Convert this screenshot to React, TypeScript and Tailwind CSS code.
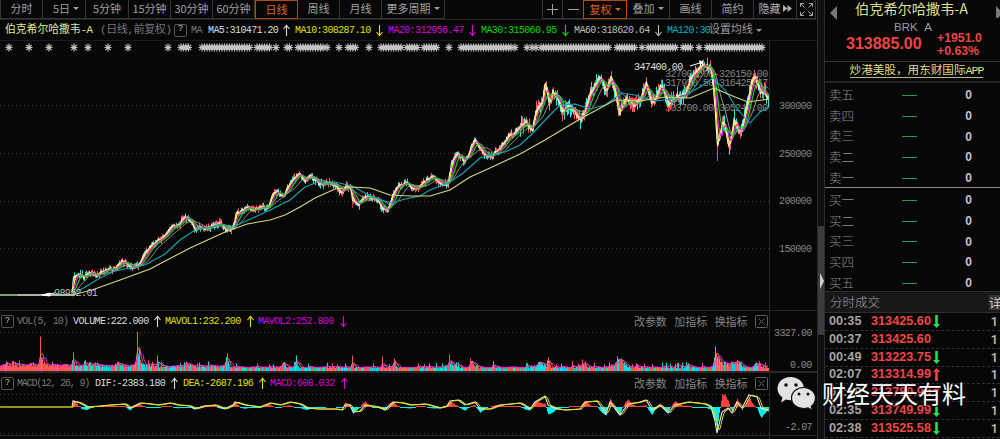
import React from 'react';
import clsx from 'clsx';

type Point = [number, number];

const parse = (s: string): Point[] => s.split(' ').map(p => p.split(',').map(Number) as Point);

const PRICE = parse(
  '0,295 72,295 73,277 80,274 84,277 90,273 97,276 105,270 115,268 122,261 128,265 133,268 138,265 143,256 150,246 158,241 167,233 172,226 180,224 184,216 190,220 195,231 200,227 205,228 213,226 220,223 226,230 231,229 234,224 236,213 241,212 246,207 252,210 262,208 268,208 272,195 277,191 281,196 284,195 288,186 295,177 299,173 305,181 310,176 317,182 323,185 330,182 336,186 341,193 346,186 350,188 352,199 359,205 364,197 371,198 376,200 384,210 388,209 393,195 396,188 406,182 412,188 418,188 424,182 433,177 440,184 448,184 451,164 457,153 464,162 470,150 474,139 480,149 486,156 492,156 500,148 508,138 515,134 520,126 525,122 532,130 536,110 542,104 545,84 549,104 553,92 557,98 562,112 568,105 573,110 580,120 586,108 589,94 594,88 600,75 606,92 611,77 616,96 619,115 626,98 634,104 640,100 646,83 652,104 657,95 661,84 668,105 674,100 679,95 685,95 690,78 696,72 702,65 710,66 713,82 717,145 723,120 729,148 734,120 740,135 746,110 751,82 755,76 760,92 764,90 769,100'
);
const MA120 = '72,295 100,278 115,271 145,265 165,254 180,240 195,230 215,226 235,226 255,217 270,210 290,200 305,187 318,182 335,182 352,186 365,193 380,200 392,203 405,199 420,196 430,190 448,183 462,174 480,158 488,155 505,152 520,145 532,134 550,115 560,105 575,104 590,109 605,105 622,93 635,95 655,101 680,98 700,87 713,78 725,90 738,110 750,123 760,112 769,107';
const MA250 = '72,295 92,290 120,280 150,269 190,248 225,232 247,224 270,220 285,215 300,207 315,198 335,189 352,187 370,188 390,195 410,196 430,196 450,190 470,177 490,168 520,154 545,140 580,119 615,100 640,101 665,97 690,98 714,88 735,97 748,102 769,99';
const DIF = parse(
  '0,407 72,407 73,401 80,403 87,407 100,406 110,405 125,404 130,408 140,403 150,404 158,405 170,403 178,405 190,406 195,409 205,406 215,405 225,409 233,405 235,402 245,405 260,407 270,403 280,405 290,402 300,404 307,408 318,409 335,409 342,410 345,405 350,405 353,412 360,411 365,405 378,407 385,410 393,402 403,403 410,405 425,404 440,408 447,406 450,401 458,400 465,405 475,402 480,409 490,409 500,405 520,403 530,409 535,402 540,399 545,396 548,405 557,409 565,410 580,409 585,402 597,401 602,408 606,414 610,402 616,410 620,415 628,404 640,402 646,400 652,410 660,405 668,413 675,405 688,402 705,404 711,407 715,421 717,433 722,412 728,408 732,413 737,402 742,408 749,395 757,397 761,408 769,411'
);

// small deterministic generator, so the candles don't jump between renders
const random = (seed: number) => () => {
  seed = (seed * 16807) % 2147483647;
  return seed / 2147483647;
};

const sample = (pts: Point[], x: number) => {
  const i = Math.max(1, pts.findIndex(p => p[0] >= x));
  const [x0, y0] = pts[i - 1];
  const [x1, y1] = pts[i];
  return y0 + ((y1 - y0) * (x - x0)) / (x1 - x0);
};

const STEP = 0.5;
const noise = random(77);
const closes: Point[] = Array.from({ length: 1538 }, (_, i) => {
  const x = i * STEP;
  const amp = x < 72 ? 0 : x < 500 ? 4 : 7;
  return [x, sample(PRICE, x) + (noise() - 0.5) * amp];
});

const average = (pts: Point[], n: number) => {
  let sum = 0;
  return pts
    .map(([x, y], i) => {
      sum += y;
      if (i >= n) sum -= pts[i - n][1];
      return `${x},${(sum / Math.min(n, i + 1)).toFixed(1)}`;
    })
    .join(' ');
};

const candleNoise = random(1234);
const candles = closes
  .filter(([x], i) => x > 72 && i % 2 === 0)
  .map(([x, y]) => {
    const amp = x < 520 ? 3 : 7;
    return { x: x + 0.5, top: y - 1 - candleNoise() * amp, bottom: y + 1 + candleNoise() * amp, up: candleNoise() > 0.5 };
  });

// [x, height, spread]
const SPIKES = [
  [30, 4, 2], [40, 22, 0.8], [42, 6, 2], [73, 7, 1.5], [90, 6, 1], [117, 4, 2], [137, 34, 0.7], [138, 12, 2.2], [157, 14, 0.6], [187, 4, 2], [227, 7, 2.5],
  [283, 5, 3], [296, 12, 1.2], [352, 11, 1], [382, 8, 1], [394, 8, 2], [418, 5, 1], [449, 13, 0.8], [451, 4, 5], [472, 6, 3], [493, 8, 0.8], [540, 5, 5],
  [548, 9, 1.5], [572, 6, 0.7], [583, 5, 3], [619, 7, 6], [688, 5, 1.5], [715, 12, 1], [717, 12, 4], [725, 4, 6], [737, 7, 4], [757, 4, 4],
];
const volNoise = random(4242);
const volumes = Array.from({ length: 769 }, (_, x) => {
  const base = x < 150 ? 6 : x < 230 ? 5 : 3.8;
  const h = SPIKES.reduce((v, [c, a, w]) => v + a * Math.exp(-((x - c) ** 2) / (w * w)), base);
  const r = volNoise();
  const up = volNoise() > (x < 72 ? 0.02 : 0.5);
  return { x, h: h * (0.7 + r * 0.45) + (volNoise() > 0.9 ? 4 : 0), up };
});
const volLine = (k: number) => average(volumes.map(v => [v.x, 371 - v.h] as Point), k);

const dense = Array.from({ length: 768 }, (_, x) => [x, sample(DIF, x)] as Point);
const difLine = DIF.map(p => p.join(',')).join(' ');
const hist = Array.from({ length: 697 }, (_, i) => {
  const x = i + 72;
  const lag = (sample(DIF, Math.max(0, x - 2)) + sample(DIF, Math.max(0, x - 5)) + sample(DIF, Math.max(0, x - 8))) / 3;
  return { x, h: (lag - sample(DIF, x)) * 1.1 };
});

const STARS = [
  [9], [29], [49], [74], [88], [108], [128], [168], [181, 190], [202, 251], [257, 271], [276], [287, 290], [298, 324], [327], [339], [348, 356],
  [369], [381, 402], [407, 417], [424, 438], [449], [461, 511], [515], [527], [532], [536], [541, 610], [617, 636], [642], [648, 676],
  [683, 692], [699], [707, 763],
];
const stars = STARS.flatMap(([a, b = a]) => {
  const xs: number[] = [];
  for (let x = a; x <= b; x += 2.5) xs.push(x);
  return xs;
});

const Caret = () => <span className="ml-[3px] border-x-[3px] border-t-[3px] border-x-transparent border-t-current" />;

const Tab = ({ label, width, caret, active }: { label: string; width: string; caret?: boolean; active?: boolean }) => (
  <div
    className={clsx(
      'flex h-[19px] shrink-0 items-center justify-center whitespace-nowrap border-b pb-px text-[11px]',
      width,
      active ? 'border border-[#b9480c] text-[#e0611c]' : 'border-r border-[#353535] text-[#a0a0a0]'
    )}
  >
    {label}
    {caret && <Caret />}
  </div>
);

const Arrow = ({ down }: { down?: boolean }) => (
  <svg width="7" height="13" viewBox="0 0 7 13" className={clsx('shrink-0', down && 'rotate-180')}>
    <path d="M3.5 12V1.5M.5 5l3-3.7 3 3.7" fill="none" stroke="currentColor" strokeWidth="1.1" />
  </svg>
);

const Metric = ({ text, width, color, down }: { text: string; width: string; color: string; down?: boolean }) => (
  <div className={clsx('flex shrink-0 items-center justify-between', width, color)}>
    <span>{text}</span>
    <Arrow down={down} />
  </div>
);

const Help = () => (
  <span className="flex h-[13px] w-[13px] shrink-0 items-center justify-center rounded-[2px] border border-[#555] text-[9px] tracking-normal text-[#bbb]">?</span>
);

const mono = "font-['Liberation_Mono','Noto_Sans_CJK_SC',monospace] text-[10px] tracking-[-0.6px] whitespace-pre";
const svgMono = "font-['Liberation_Mono',monospace] text-[10px] tracking-[-0.6px]";

const PanelActions = () => (
  <div className="ml-auto flex w-[134px] items-center justify-between font-['Noto_Sans_CJK_SC',sans-serif] text-[11px] tracking-[-0.1px] text-[#858585]">
    <span>改参数</span>
    <span>加指标</span>
    <span>换指标</span>
    <svg width="13" height="13" viewBox="0 0 13 13" fill="none" stroke="#606060">
      <rect x=".5" y=".5" width="12" height="12" rx="1" />
      <path d="M3.5 3.5l6 6M9.5 3.5l-6 6" />
    </svg>
  </div>
);

const Toolbar = () => (
  <div className="flex h-5 w-[817px] border-b border-[#242424]">
    <div className="flex border-l border-[#353535]">
      <Tab label="分时" width="w-[42px]" />
      <Tab label="5日" width="w-[43px] pl-1" caret />
      <Tab label="5分钟" width="w-[43px]" />
      <Tab label="15分钟" width="w-[42px]" />
      <Tab label="30分钟" width="w-[42px]" />
      <Tab label="60分钟" width="w-[42px]" />
      <Tab label="日线" width="w-[43px]" active />
      <Tab label="周线" width="w-[42px]" />
      <Tab label="月线" width="w-[42px]" />
      <Tab label="更多周期" width="w-[63px]" caret />
    </div>
    <div className="ml-auto mr-px flex border-l border-[#353535]">
      <div className="flex h-[19px] w-5 items-center justify-center border-r border-b border-[#353535]">
        <svg width="11" height="11" stroke="#a0a0a0"><path d="M5.5 0v11M0 5.5h11" /></svg>
      </div>
      <div className="flex h-[19px] w-5 items-center justify-center border-b border-[#353535]">
        <svg width="11" height="11" stroke="#a0a0a0"><path d="M0 5.5h11" /></svg>
      </div>
      <Tab label="复权" width="w-11" caret active />
      <Tab label="叠加" width="w-[43px]" caret />
      <Tab label="画线" width="w-[42px]" />
      <Tab label="简约" width="w-[42px]" />
      <div className="flex h-[19px] w-[43px] items-center justify-center gap-[2px] border-r border-b border-[#353535] pb-px text-[11px] text-[#b0b0b0]">
        隐藏
        <svg width="9" height="7" fill="#b0b0b0"><path d="M0 0l4.5 3.5L0 7zM4.5 0L9 3.5 4.5 7z" /></svg>
      </div>
      <div className="flex h-[19px] w-[19px] items-center justify-center border-r border-b border-[#353535]">
        <svg width="13" height="13" viewBox="0 0 13 13" fill="none" stroke="#a8a8a8">
          <path d="M.5 4V.5H4M.5.5l4 4M9 .5h3.500V4M12.500.5l-4 4M.5 9v3.500H4M.5 12.500l4-4M9 12.500h3.500V9M12.500 12.500l-4-4" />
        </svg>
      </div>
    </div>
  </div>
);

const MaHeader = () => (
  <div className={clsx('flex h-[21px] items-center border-b border-[#1c1c1c] pl-[5px]', mono)}>
    <span className="w-[95px] shrink-0 text-[10.8px] tracking-[-0.5px] text-[#e6e696]">
      <span className="tracking-normal">伯克希尔哈撒韦</span>-A
    </span>
    <span className="w-[74px] shrink-0 text-[11px] tracking-[-0.4px] text-[#777]">(日线,前复权)</span>
    <Help />
    <span className="ml-[4px] w-[17px] shrink-0 text-[#777]">MA</span>
    <Metric text="MA5:310471.20" width="w-[82px]" color="text-[#dcdcdc]" />
    <Metric text="MA10:308287.10" width="ml-[5px] w-[88px]" color="text-[#e0e000]" down />
    <Metric text="MA20:312956.47" width="ml-[5px] w-[88px]" color="text-[#dc00dc]" down />
    <Metric text="MA30:315060.95" width="ml-[5px] w-[88px]" color="text-[#00dc00]" down />
    <Metric text="MA60:318620.64" width="ml-[5px] w-[88px]" color="text-[#bcbcbc]" down />
    <span className="ml-[5px] w-[42px] shrink-0 text-[#00b4c4]">MA120:30</span>
    <span className="flex shrink-0 items-center text-[11px] tracking-[-0.1px] text-[#9a9a9a]">
      设置均线
      <Caret />
    </span>
  </div>
);

const line = (points: string, stroke: string, width = 1) => <polyline points={points} fill="none" stroke={stroke} strokeWidth={width} />;

const PriceChart = () => (
  <svg width="817" height="269" viewBox="0 41 817 269" className="block shrink-0">
    <path
      d={stars.map(x => `M${x - 3.5} 47.500h7M${x} 43.500v8M${x - 2.7} 44.800l5.400 5.400M${x - 2.7} 50.200l5.400-5.400`).join('')}
      stroke="#c4c4c4"
      strokeWidth="1.200"
    />
    {[105.5, 153.5, 201.5, 248.5].map(y => (
      <path key={y} d={`M0 ${y}H769`} stroke="#3a3a3a" strokeDasharray="1 3" />
    ))}
    <path d="M769.500 41V310" stroke="#2a2a2a" />
    <g className={svgMono} fill="#858585">
      <text x="665" y="77">327000.00-326150.00</text>
      <text x="665" y="86">317950.50-316425.47</text>
      <text x="665" y="111">303700.00-305247.00</text>
      <text x="779" y="109">300000</text>
      <text x="779" y="157">250000</text>
      <text x="779" y="204">200000</text>
      <text x="779" y="252">150000</text>
    </g>
    {candles.map(c => (
      <path key={c.x} d={`M${c.x} ${c.top}V${c.bottom}`} stroke={c.up ? '#f05a5a' : '#30e0e0'} />
    ))}
    <path d="M717.500 130V161" stroke="#20a0b0" />
    <path d="M352.500 200V208" stroke="#a04040" />
    {line(average(closes, 2), '#fff0d0', 1.1)}
    {line(average(closes, 6), '#f0f040', 1.2)}
    {line(average(closes, 11), '#e020e0', 1.2)}
    {line(average(closes, 18), '#10d010', 1.2)}
    {line(average(closes, 34), '#a0a0a0')}
    {line(MA120, '#10a8b8', 1.1)}
    {line(MA250, '#d8d880', 1.1)}
    <path d="M17 295H72" stroke="#b8b8b8" strokeWidth="1.500" />
    <path d="M690 66l13-4M699 61l4 1-3 3M42 295l8-2v3zM50 294l5-1" stroke="#fff" fill="#fff" />
    <g className={svgMono} fill="#e0e0e0">
      <text x="634" y="70">347400.00</text>
      <text x="54" y="296" fill="#bdbdbd">98952.01</text>
    </g>
  </svg>
);

const VolumePanel = () => (
  <div className="h-[62px] border-t border-[#262626]">
    <div className="flex h-[21px]">
      <div className={clsx('flex w-[769px] items-center pl-px pr-[1px]', mono)}>
        <Help />
        <span className="ml-[3px] w-[56px] shrink-0 tracking-[-0.9px] text-[#777]">VOL(5, 10)</span>
        <Metric text="VOLUME:222.000" width="w-[88px]" color="text-[#dcdcdc]" />
        <Metric text="MAVOL1:232.200" width="ml-[4px] w-[89px]" color="text-[#e0e000]" />
        <Metric text="MAVOL2:252.800" width="ml-[4px] w-[89px]" color="text-[#dc00dc]" down />
        <PanelActions />
      </div>
      <div className="w-px bg-[#2a2a2a]" />
    </div>
    <svg width="817" height="40" viewBox="0 332 817 40" className="block overflow-visible">
      <path d="M0 332.500H769" stroke="#3a3a3a" strokeDasharray="1 3" />
      <path d="M769.500 331V372M0 371.500H817" stroke="#2a2a2a" />
      {volumes.map(v => (
        <path key={v.x} d={`M${v.x + 0.5} 371V${Math.max(332, 371 - v.h)}`} stroke={v.up ? '#ff5555' : '#00e0e6'} />
      ))}
      {line(volLine(4), '#e8b050', 0.7)}
      {line(volLine(7), '#f020f0', 1)}
      <g className={svgMono} fill="#8c8c8c">
        <text x="774" y="336">3327.00</text>
        <text x="790" y="368">0.00</text>
      </g>
    </svg>
  </div>
);

const MacdPanel = () => (
  <div className="h-[67px]">
    <div className="flex h-[22px] border-t border-[#262626]">
      <div className={clsx('flex w-[769px] items-center pl-px pr-[1px]', mono)}>
        <Help />
        <span className="ml-[3px] w-[78px] shrink-0 tracking-[-1.2px] text-[#777]">MACD(12, 26, 9)</span>
        <Metric text="DIF:-2383.180" width="w-[83px]" color="text-[#dcdcdc]" />
        <Metric text="DEA:-2687.196" width="ml-[5px] w-[83px]" color="text-[#e0e000]" />
        <Metric text="MACD:608.032" width="ml-[4px] w-[78px]" color="text-[#dc00dc]" />
        <PanelActions />
      </div>
      <div className="w-px bg-[#2a2a2a]" />
    </div>
    <svg width="817" height="45" viewBox="0 394 817 45" className="block">
      <path d="M0 394.500H769M0 433.500H769" stroke="#3a3a3a" strokeDasharray="1 3" />
      <path d="M769.500 394V439M0 435.500H817" stroke="#2a2a2a" />
      {hist.map(b => (
        <path key={b.x} d={`M${b.x + 0.5} 407V${407 - (Math.abs(b.h) < 1 ? Math.sign(b.h) : b.h)}`} stroke={b.h > 0 ? '#ff4040' : '#00f0f0'} />
      ))}
      {line(difLine, '#e8e8e8', 1.1)}
      <g transform="translate(1 0)">{line(average(dense, 3), '#e4e400', 1)}</g>
      <path d="M0 407H72" stroke="#8c8c00" strokeWidth="1.500" />
      <text x="785" y="430" className={svgMono} fill="#8c8c8c">-2.07</text>
    </svg>
  </div>
);

const Level = ({ label }: { label: string }) => (
  <div className="flex h-[20.7px] items-center pl-[4px]">
    <span className="w-[73px] text-[12.5px] font-light text-[#909090]">{label}</span>
    <span className="h-px w-[15px] bg-[#23a045]" />
    <span className="ml-auto mr-[28px] font-['Liberation_Sans',sans-serif] text-[12px] font-bold text-[#c4c4c4]">0</span>
  </div>
);

const TRADES = [
  { time: '00:35', price: '313425.60', dir: 'down' },
  { time: '00:37', price: '313425.60', dir: '' },
  { time: '00:49', price: '313223.75', dir: 'down' },
  { time: '02:07', price: '313314.99', dir: 'up' },
  { time: '02:19', price: '313780.99', dir: 'up' },
  { time: '02:35', price: '313749.99', dir: 'down' },
  { time: '02:38', price: '313525.58', dir: 'down' },
];

const QuotePanel = () => (
  <div className="flex w-[176px] shrink-0 flex-col overflow-hidden border-l border-[#2c2c2c]">
    <div className="flex h-[62px] flex-col border-b border-[#343434]">
      <div className="flex h-[18px] pl-[5px]">
        <span className="mt-[6px] border-y-[7px] border-r-[7px] border-y-transparent border-r-[#777]" />
        <span className="ml-[18px] whitespace-nowrap text-[14.2px] leading-4 text-[#dede92]">伯克希尔哈撒韦-A</span>
        <span className="mt-[6px] ml-auto w-[4px] overflow-hidden"><span className="block border-y-[7px] border-l-[7px] border-y-transparent border-l-[#777]" /></span>
      </div>
      <div className="h-[14px] pl-px text-center font-['Liberation_Sans',sans-serif] text-[11.5px] leading-[18px] text-[#989ca4] [word-spacing:4px]">BRK A</div>
      <div className="flex pl-[21px] font-['Liberation_Sans',sans-serif] font-bold text-[#ee4444]">
        <span className="w-[91px] text-[16px] leading-[23px]">313885.00</span>
        <span className="text-[12.3px] leading-[13px]">+1951.0<br />+0.63%</span>
      </div>
    </div>
    <div className="flex h-[21px] shrink-0 items-center justify-center border-b-2 border-[#242424] pl-[8px]">
      <span className="border-b border-[#b8b878] font-['Liberation_Mono','Noto_Sans_CJK_SC',monospace] text-[11.6px] leading-[12px] whitespace-nowrap text-[#dede92]">炒港美股，用东财国际<span className="tracking-[-1px]">APP</span></span>
    </div>
    <div className="h-[105px] shrink-0 border-b border-[#8a8a8a] pt-[2px]">
      {['卖五', '卖四', '卖三', '卖二', '卖一'].map(l => <Level key={l} label={l} />)}
    </div>
    <div className="h-[103px] shrink-0 pt-[2px]">
      {['买一', '买二', '买三', '买四', '买五'].map(l => <Level key={l} label={l} />)}
    </div>
    <div className="flex h-[22px] shrink-0 items-center justify-between border-y border-[#2e2e2e] bg-[#181818] pl-[5px] text-[12.5px] font-light text-[#a4a4a4]">
      <span>分时成交</span>
      <span className="w-[11px] overflow-hidden bg-[#333] font-normal leading-[15px] text-[#ccc]">详</span>
    </div>
    {TRADES.map(t => (
      <div key={t.time} className="flex h-[17.85px] shrink-0 items-center border-b border-dashed border-[#303030] pl-[4px] font-['Liberation_Sans',sans-serif] text-[12.7px] font-bold">
        <span className="w-[42px] text-[#a4a4a4]">{t.time}</span>
        <span className="w-[61px] text-[#ec4848]">{t.price}</span>
        {t.dir && (
          <svg width="7" height="13" viewBox="0 0 7 13" fill={t.dir === 'up' ? '#ff4040' : '#2ade55'} className={clsx('ml-[1px]', t.dir === 'down' && 'rotate-180')}>
            <path d="M3.500 0L7 4H4.800V13H2.200V4H0z" />
          </svg>
        )}
        <span className="ml-auto mr-[2px] font-['Roboto',sans-serif] font-medium text-[#c0c0c0]">1</span>
      </div>
    ))}
  </div>
);

const Watermark = () => (
  <div className="absolute left-[777px] top-[375px] flex items-center">
    <svg width="39" height="35" viewBox="0 0 39 35">
      <path d="M13.500 1C6 1 .5 6 .5 12.500c0 4 2 7 5 9l-1.500 5 5-3q2 .7 5 .7C21 24 27 19 27 12.500S21 1 13.500 1z" fill="#e2e2e2" />
      <path d="M26.500 11.500C20 11.500 14.500 16 14.500 22s5 10.500 12 10.500q2.500 0 4.500-.7l4.500 2.500-1.200-4c2.500-2 4.200-4.800 4.200-8.300 0-6-5.500-10.500-12-10.500z" fill="#e2e2e2" stroke="#111" strokeWidth="1.200" />
      <g fill="#111">
        <circle cx="9" cy="9" r="1.800" />
        <circle cx="19" cy="9" r="1.800" />
        <circle cx="22" cy="18" r="1.500" />
        <circle cx="31" cy="18" r="1.500" />
      </g>
    </svg>
    <span className="ml-[6px] whitespace-nowrap text-[24px] leading-[36px] text-white [text-shadow:1px_1px_1px_#000]">财经天天有料</span>
  </div>
);

export default function App() {
  return (
    <div className="relative flex h-[439px] w-[1000px] overflow-hidden bg-[#070707] font-['Noto_Sans_CJK_SC',sans-serif]">
      <div className="flex w-[817px] shrink-0 flex-col">
        <Toolbar />
        <MaHeader />
        <PriceChart />
        <VolumePanel />
        <MacdPanel />
      </div>
      <div className="flex w-[7px] shrink-0 flex-col border-l border-[#2c2c2c] bg-[#101010] pt-[226px]">
        <div className="flex h-[109px] items-center bg-[#3c3c3c]">
          <span className="ml-[2px] border-y-[8px] border-l-[4px] border-y-transparent border-l-[#d0d0d0]" />
        </div>
      </div>
      <QuotePanel />
      <Watermark />
    </div>
  );
}
